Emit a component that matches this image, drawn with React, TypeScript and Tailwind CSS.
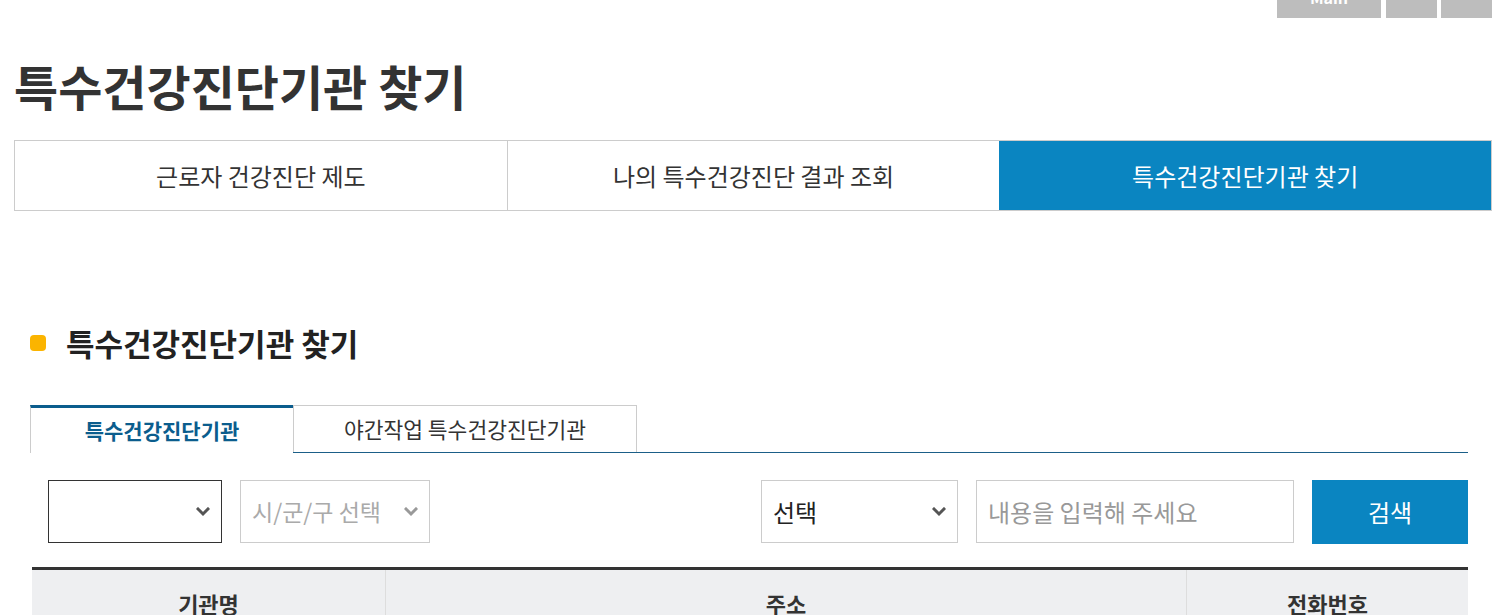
import React from "react";

const font = { fontFamily: '"Noto Sans CJK KR", "Noto Sans", sans-serif' };

function Chevron({ color = "#555" }: { color?: string }) {
    return (
        <svg width="14" height="10" viewBox="0 0 14 10" className="shrink-0">
            <polyline points="2,2 7,7 12,2" fill="none" stroke={color} strokeWidth="3" strokeLinecap="square" />
        </svg>
    );
}

export default function App() {
    const tabs = ["근로자 건강진단 제도", "나의 특수건강진단 결과 조회", "특수건강진단기관 찾기"];

    return (
        <div style={font} className="w-[1502px] h-[615px] overflow-hidden bg-white text-[#333]">
            {/* top utility buttons, cut off by the viewport */}
            <div className="flex justify-end h-[18px] pr-[10px] gap-[5px]">
                <div className="w-[104px] h-[18px] bg-[#bdbdbd] overflow-hidden flex items-end justify-center">
                    <span className="text-white text-[16px] font-bold leading-none mb-[13px]">Main</span>
                </div>
                <div className="w-[51px] h-[18px] bg-[#bdbdbd] mr-[-1px]" />
                <div className="w-[51px] h-[18px] bg-[#bdbdbd]" />
            </div>

            <div className="pl-[14px] pr-[10px]">
                <h1 className="mt-[38px] text-[48px] leading-[58px] font-bold text-[#333]">
                    특수건강진단기관 찾기
                </h1>

                {/* main tabs */}
                <div className="mt-[26px] flex border border-[#ccc] h-[71px]">
                    {tabs.map((t, i) => (
                        <div
                            key={t}
                            className={`flex-1 flex items-center justify-center text-[24px] ${
                                i === 2 ? "bg-[#0a85c1] text-white" : "text-[#333]"
                            } ${i === 1 ? "border-l border-[#ccc]" : ""}`}
                        >
                            {t}
                        </div>
                    ))}
                </div>
            </div>

            <div className="pl-[30px] pr-[34px]">
                {/* section heading */}
                <div className="mt-[114px] flex items-center h-[36px]">
                    <span className="w-[16px] h-[16px] rounded-[4px] bg-[#fbb400]" />
                    <h2 className="ml-[20px] text-[31px] font-bold leading-[36px] text-[#222]">특수건강진단기관 찾기</h2>
                </div>

                {/* sub tabs */}
                <div className="mt-[44px] flex items-end border-b border-[#1b5f88]">
                    <div className="w-[263px] h-[48px] border-t-[3px] border-t-[#0b5d8d] border-l border-l-[#ccc] bg-white mb-[-1px] flex items-center justify-center text-[21px] font-bold text-[#0b5d8d]">
                        특수건강진단기관
                    </div>
                    <div className="w-[344px] h-[47px] border border-b-0 border-[#ccc] flex items-center justify-center text-[21.5px] text-[#333]">
                        야간작업 특수건강진단기관
                    </div>
                </div>

                {/* search form */}
                <div className="mt-[27px] pl-[18px] flex h-[63px]">
                    <div className="w-[174px] border border-[#333] flex items-center justify-end pr-[11px]">
                        <Chevron />
                    </div>
                    <div className="ml-[18px] w-[190px] border border-[#ccc] flex items-center justify-between pl-[11px] pr-[11px] text-[23px] text-[#aaa]">
                        <span>시/군/구 선택</span>
                        <Chevron color="#999" />
                    </div>
                    <div className="flex-1" />
                    <div className="w-[197px] border border-[#ccc] flex items-center justify-between pl-[11px] pr-[11px] text-[24px] text-[#222]">
                        <span>선택</span>
                        <Chevron />
                    </div>
                    <div className="ml-[18px] w-[318px] border border-[#ccc] flex items-center pl-[11px] text-[24px] text-[#999]">
                        내용을 입력해 주세요
                    </div>
                    <div className="ml-[18px] w-[156px] h-[64px] bg-[#0a85c1] flex items-center justify-center text-[24px] text-white">
                        검색
                    </div>
                </div>

                {/* table header */}
                <div className="mt-[24px] ml-[2px] border-t-[3px] border-[#333] bg-[#eeeff1] flex h-[60px] text-[22px] font-bold text-[#333]">
                    <div className="w-[353px] flex items-center justify-center pt-[9px]">기관명</div>
                    <div className="flex-1 border-l border-[#ddd] flex items-center justify-center pt-[9px]">주소</div>
                    <div className="w-[282px] border-l border-[#ddd] flex items-center justify-center pt-[9px]">전화번호</div>
                </div>
            </div>
        </div>
    );
}
